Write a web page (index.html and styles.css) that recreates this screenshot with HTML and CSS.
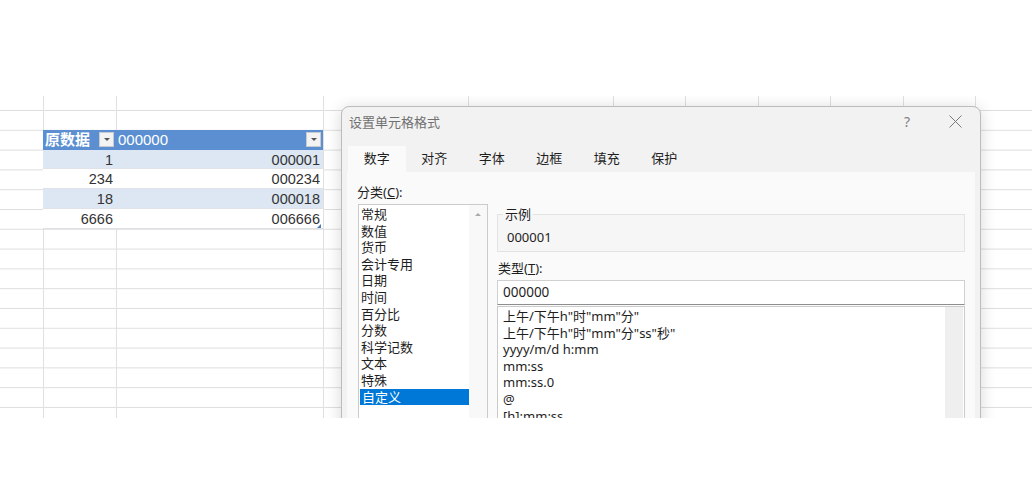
FILE: index.html
```html
<!DOCTYPE html>
<html lang="zh-CN">
<head>
    <meta charset="UTF-8">
    <title>设置单元格格式</title>
    <link rel="stylesheet" href="styles.css">
</head>
<body>
<div class="sheet">
    <div class="table">
        <div class="cell head">原数据<span class="drop"><i></i></span></div>
        <div class="cell head">000000<span class="drop"><i></i></span></div>

        <div class="cell band">1</div>
        <div class="cell band">000001</div>
        <div class="cell">234</div>
        <div class="cell">000234</div>
        <div class="cell band">18</div>
        <div class="cell band">000018</div>
        <div class="cell">6666</div>
        <div class="cell last">006666</div>
    </div>

    <!-- format cells dialog sits over the sheet -->
    <div class="dialog">
        <div class="titlebar">
            <span class="title">设置单元格格式</span>
            <span class="help">?</span>
            <svg class="close" width="13" height="13" viewBox="0 0 13 13">
                <path d="M0.5 0.5 L12.5 12.5 M12.5 0.5 L0.5 12.5" stroke="#7a7a7a" stroke-width="1" fill="none"/>
            </svg>
        </div>

        <div class="tabs">
            <div class="tab active">数字</div>
            <div class="tab">对齐</div>
            <div class="tab">字体</div>
            <div class="tab">边框</div>
            <div class="tab">填充</div>
            <div class="tab">保护</div>
        </div>

        <div class="panel">
            <div class="left">
                <div class="label">分类(<u>C</u>):</div>
                <div class="listbox">
                    <div class="items">
                        <div class="item">常规</div>
                        <div class="item">数值</div>
                        <div class="item">货币</div>
                        <div class="item">会计专用</div>
                        <div class="item">日期</div>
                        <div class="item">时间</div>
                        <div class="item">百分比</div>
                        <div class="item">分数</div>
                        <div class="item">科学记数</div>
                        <div class="item">文本</div>
                        <div class="item">特殊</div>
                        <div class="item selected">自定义</div>
                    </div>
                    <div class="scroll"><span class="up"></span></div>
                </div>
            </div>

            <div class="right">
                <fieldset class="sample">
                    <legend>示例</legend>
                    <div class="sample-value">000001</div>
                </fieldset>

                <div class="label type-label">类型(<u>T</u>):</div>
                <div class="type-input">000000</div>

                <div class="formats">
                    <div class="items">
                        <div class="item">上午/下午h"时"mm"分"</div>
                        <div class="item">上午/下午h"时"mm"分"ss"秒"</div>
                        <div class="item">yyyy/m/d h:mm</div>
                        <div class="item">mm:ss</div>
                        <div class="item">mm:ss.0</div>
                        <div class="item">@</div>
                        <div class="item">[h]:mm:ss</div>
                    </div>
                    <div class="scroll"></div>
                </div>
            </div>
        </div>
    </div>
</div>
</body>
</html>
```

FILE: styles.css
```css
body {
    margin: 0;
    background: #ffffff;
    font-family: 'Liberation Sans', 'Noto Sans CJK SC', sans-serif;
}

/* the spreadsheet behind the dialog */
.sheet {
    position: relative;
    margin-top: 96px;
    height: 322px;
    overflow: hidden;
    box-sizing: border-box;
    padding: 33.8px 0 0 43px;
    background-image:
        linear-gradient(to right, transparent 43px, #e0e0e0 43px 44px, transparent 44px 116px, #e0e0e0 116px 117px, transparent 117px 323px, #e0e0e0 323px 324px, transparent 324px),
        repeating-linear-gradient(to right, transparent 0 71.5px, #e0e0e0 71.5px 72.5px),
        repeating-linear-gradient(to bottom, transparent 0 18.8px, #dedede 18.8px 19.8px);
    background-position: 0 0, 324px 0, 0 -4.8px;
    background-size: 100% 100%, 740px 100%, 100% 19.8px;
    background-repeat: no-repeat, no-repeat, repeat;
}

.table {
    display: grid;
    grid-template-columns: 73px 207px;
    grid-auto-rows: 19.8px;
    width: 280px;
    position: relative;
}

.cell {
    box-sizing: border-box;
    background: #ffffff;
    border-bottom: 1px solid #dfe3e8;
    font-size: 14.5px;
    color: #333;
    text-align: right;
    padding: 1px 3px 0 0;
    line-height: 19px;
}

.band {
    background: #dce7f3;
}

.head {
    background: #5b8fd1;
    color: #fff;
    text-align: left;
    font-size: 15px;
    padding: 0 0 0 2px;
    display: flex;
    align-items: center;
    justify-content: space-between;
    border-bottom: 1px solid #5b8fd1;
}

.head:first-child {
    font-weight: bold;
}

.drop {
    width: 15px;
    height: 15px;
    margin-right: 2px;
    box-sizing: border-box;
    background: #f3f3f3;
    border: 1px solid #c6cbd2;
    display: flex;
    align-items: center;
    justify-content: center;
}

.drop i {
    border-left: 3px solid transparent;
    border-right: 3px solid transparent;
    border-top: 3px solid #555;
}

.last {
    position: relative;
}

.last::after {
    content: '';
    position: absolute;
    right: 2px;
    bottom: 0;
    border-left: 4px solid transparent;
    border-bottom: 4px solid #4a78b8;
}

/* dialog */
.dialog {
    position: absolute;
    left: 341px;
    top: 10px;
    width: 640px;
    height: 400px;
    box-sizing: border-box;
    background: #f2f2f2;
    border: 1px solid #bcbcbc;
    border-radius: 8px;
    box-shadow: 0 2px 16px rgba(0, 0, 0, 0.16);
    font-family: 'Noto Sans', 'Noto Sans CJK SC', sans-serif;
    font-size: 13px;
    color: #1e1e1e;
}

.titlebar {
    height: 29px;
    display: flex;
    align-items: center;
    padding-left: 7px;
}

.title {
    color: #707070;
    flex: 1;
}

.help {
    color: #808080;
    font-size: 14px;
    margin-right: 39px;
}

.close {
    margin-right: 18px;
}

.tabs {
    display: flex;
    padding: 10px 0 0 6px;
}

.tab {
    width: 57.5px;
    height: 26px;
    line-height: 25px;
    text-align: center;
}

.tab.active {
    background: #fafafa;
}

.panel {
    margin: 0 5px;
    height: 400px;
    background: #fafafa;
    display: flex;
    padding: 12px 0 0 10px;
}

.label {
    line-height: 16px;
}

.left {
    width: 140px;
}

.listbox {
    margin: 4px 0 0 1px;
    width: 130px;
    height: 230px;
    box-sizing: border-box;
    background: #fff;
    border: 1px solid #cbcbcb;
    display: flex;
}

.items {
    flex: 1;
    padding-top: 1px;
}

.item {
    line-height: 16.6px;
    padding-left: 2px;
    white-space: nowrap;
}

.listbox .item.selected {
    background: #0078d7;
    color: #fff;
    margin-left: 1px;
}

.scroll {
    width: 18px;
    background: #f8f8f8;
    display: flex;
    justify-content: center;
}

.up {
    margin-top: 8px;
    border-left: 3px solid transparent;
    border-right: 3px solid transparent;
    border-bottom: 3px solid #a8a8a8;
    height: 0;
}

.right {
    width: 468px;
    padding-top: 22px;
}

.sample {
    margin: 0;
    padding: 7px 4px 6px 5px;
    border: 1px solid #e3e3e3;
    background: #f6f6f6;
}

.sample legend {
    padding: 0 2px;
    line-height: 16px;
}

.sample-value {
    line-height: 16px;
    padding-left: 4px;
}

.type-label {
    margin-top: 8px;
    padding-left: 1px;
}

.type-input {
    margin-top: 4px;
    height: 25px;
    box-sizing: border-box;
    background: #fff;
    border: 1px solid #d0d0d0;
    border-bottom-color: #8e8e8e;
    padding: 0 5px 2px;
    display: flex;
    align-items: center;
    font-size: 13.5px;
}

.formats {
    margin-top: 1px;
    height: 140px;
    box-sizing: border-box;
    background: #fff;
    border: 1px solid #cbcbcb;
    display: flex;
}

.formats .items {
    padding: 1px 0 0 3px;
}

.formats .scroll {
    width: 18px;
    margin-right: 1px;
    background: #efefef;
}
```
